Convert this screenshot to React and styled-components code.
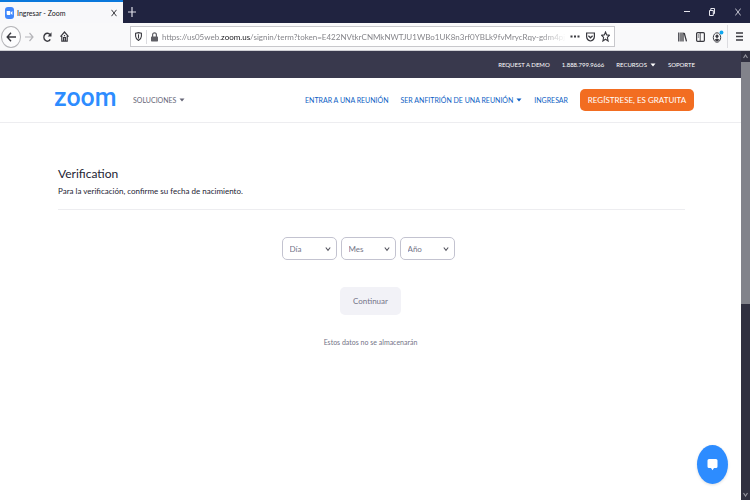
import React from "react";
import styled, { createGlobalStyle, css } from "styled-components";

const Global = createGlobalStyle`
  *, *::before, *::after { box-sizing: border-box; }
  body { margin: 0; background: #fff; color: #232333; font-family: Lato, sans-serif; }
  button, select { font-family: inherit; margin: 0; }
  a { text-decoration: none; }
`;

const Window = styled.div`
  display: flex;
  flex-direction: column;
  min-height: 100vh;
`;

const TabBar = styled.div`
  display: flex;
  align-items: stretch;
  height: 23px;
  background: #202340;
`;

const Tab = styled.div`
  display: flex;
  align-items: center;
  gap: 3px;
  width: 123px;
  padding: 0 4px 0 5px;
  border-top: 2px solid #0a78dc;
  background: #f8f8fa;
  color: #15151a;
  font: 7px Lato, sans-serif;
`;

const TabTitle = styled.span`
  flex: 1;
  white-space: nowrap;
`;

const IconButton = styled.button`
  display: flex;
  align-items: center;
  justify-content: center;
  flex: none;
  width: ${(p) => p.$w || 18}px;
  padding: 0;
  border: 0;
  background: none;
  color: ${(p) => p.$color || "#3a3a40"};
`;

const WindowControls = styled.div`
  display: flex;
  margin-left: auto;
`;

const Toolbar = styled.div`
  display: flex;
  align-items: center;
  height: 28px;
  background: #f9f9fa;
  border-bottom: 1px solid #d0d0d5;
`;

const BackButton = styled(IconButton)`
  height: 22px;
  margin-left: 1px;
  border: 1px solid #b4b4b8;
  border-radius: 50%;
  background: #fcfcfd;
`;

const AddressBar = styled.div`
  display: flex;
  align-items: center;
  flex: 1;
  min-width: 0;
  height: 21px;
  margin: 0 58px 0 57px;
  padding-right: 1px;
  border: 1px solid #c8c8cc;
  background: #fff;
`;

const Separator = styled.span`
  width: 1px;
  height: ${(p) => p.$h}px;
  background: #dcdce0;
`;

const Address = styled.div`
  flex: 1;
  min-width: 0;
  overflow: hidden;
  white-space: nowrap;
  color: #85858a;
  font: 8px/16px Lato, sans-serif;
  mask-image: linear-gradient(to right, #000 calc(100% - 26px), transparent);
  b { color: #15151a; font-weight: 400; }
`;

const Viewport = styled.div`
  display: flex;
  flex: 1;
`;

const Page = styled.div`
  flex: 1;
  min-width: 0;
`;

const Scrollbar = styled.div`
  display: flex;
  flex-direction: column;
  width: 9px;
  background: #303040;
  color: #92929c;
`;

const Thumb = styled.div`
  height: 54%;
  background: #82838b;
`;

const ScrollButton = styled(IconButton)`
  height: 11px;
  ${(p) => p.$end && css`margin-top: auto;`}
`;

const TopBar = styled.nav`
  display: flex;
  align-items: center;
  justify-content: flex-end;
  gap: 12px;
  height: 27px;
  padding: 0 46px;
  background: #39394d;
`;

const NavLink = styled.a`
  display: flex;
  align-items: center;
  gap: 3px;
  color: ${(p) => (p.$muted ? "#666677" : "#0e5fc4")};
  font-size: 7px;
  white-space: nowrap;
`;

const TopLink = styled(NavLink)`
  color: #fff;
  font-size: 6px;
`;

const Header = styled.header`
  display: flex;
  align-items: center;
  height: 45px;
  padding: 0 47px 0 54px;
  border-bottom: 1px solid #ededf0;
`;

const Logo = styled.a`
  width: 79px;
  padding-bottom: 4px;
  color: #2d8cff;
  font: 500 25px/32px Roboto, sans-serif;
`;

const MainNav = styled.nav`
  display: flex;
  align-items: center;
  gap: 12px;
  margin-left: auto;
`;

const SignUp = styled.button`
  height: 22px;
  width: 114px;
  padding: 0;
  border: 0;
  border-radius: 5px;
  background: #f26d21;
  color: #fff;
  font-size: 8px;
  white-space: nowrap;
`;

const Main = styled.main`
  padding: 43px 56px 0 58px;
`;

const Intro = styled.section`
  padding-bottom: 12px;
  border-bottom: 1px solid #ededf0;
`;

const Title = styled.h1`
  margin: 0;
  font-size: 12px;
  font-weight: 400;
  line-height: 16px;
`;

const Lead = styled.p`
  margin: 3px 0 0;
  font-size: 8px;
  line-height: 12px;
`;

const Form = styled.form`
  display: flex;
  flex-direction: column;
  align-items: center;
  padding: 27px 2px 0 0;
`;

const Fields = styled.div`
  display: flex;
  gap: 4px;
  margin-right: 5px;
`;

const Field = styled.label`
  display: grid;
  align-items: center;
  width: 55px;
  height: 23px;
  color: #55555f;
  > * { grid-area: 1 / 1; }
  svg { justify-self: end; margin-right: 6px; pointer-events: none; }
`;

const Select = styled.select`
  appearance: none;
  width: 100%;
  height: 100%;
  padding: 0 7px;
  border: 1px solid #c3c3d0;
  border-radius: 5px;
  background: #fff;
  color: #747487;
  font-size: 8px;
`;

const Continue = styled.button`
  width: 61px;
  height: 28px;
  margin: 27px 0 21px;
  border: 0;
  border-radius: 5px;
  background: #f2f2f7;
  color: #747487;
  font-size: 8px;
`;

const Note = styled.p`
  margin: 0;
  color: #747487;
  font-size: 7px;
  line-height: 12px;
`;

const ChatButton = styled.button`
  position: fixed;
  right: 22px;
  bottom: 16px;
  display: flex;
  align-items: center;
  justify-content: center;
  width: 31px;
  height: 39px;
  padding: 0;
  border: 0;
  border-radius: 50%;
  background: #2d8cff;
  box-shadow: 0 1px 3px #00000022;
`;

const Svg = ({ w = 12, h = 12, sw = 1.2, children }) => (
  <svg width={w} height={h} viewBox={`0 0 ${w} ${h}`} fill="none" stroke="currentColor" strokeWidth={sw} aria-hidden="true">
    {children}
  </svg>
);

const Caret = () => (
  <Svg w={6} h={4}><path d="M.5 .5h5L3 3.5z" fill="currentColor" stroke="none" /></Svg>
);

const Chevron = () => (
  <Svg w={6} h={6} sw={1.1}><path d="M.8 1.5 3 4.3 5.2 1.5" /></Svg>
);

const fields = ["Día", "Mes", "Año"];

export default function App() {
  return (
    <Window>
      <Global />
      <TabBar>
        <Tab>
          <Svg w={9} h={12}>
            <rect width="9" height="12" rx="3" fill="#4087fc" stroke="none" />
            <path d="M1.7 4h3.5v4H2.7q-1 0-1-1zM5.7 5.5 7.4 4v4L5.7 6.6z" fill="#fff" stroke="none" />
          </Svg>
          <TabTitle>Ingresar - Zoom</TabTitle>
          <IconButton $w={10} aria-label="Cerrar pestaña"><Svg w={6} h={8} sw={1}><path d="m.5.8 5 6.4m0-6.4-5 6.4" /></Svg></IconButton>
        </Tab>
        <IconButton $color="#dddde6" aria-label="Nueva pestaña"><Svg w={8} h={10}><path d="M4 0v10M0 5h8" /></Svg></IconButton>
        <WindowControls>
          <IconButton $w={25} $color="#e6e6ee" aria-label="Minimizar"><Svg w={6} h={8} sw={1}><path d="M0 3.5h6" /></Svg></IconButton>
          <IconButton $w={26} $color="#e6e6ee" aria-label="Restaurar"><Svg w={6} h={8} sw={1}><path d="M.5 2.5h3.8v5H.5zM1.8 2.5v-2h3.7v5H4.3" /></Svg></IconButton>
          <IconButton $w={25} $color="#d4d4de" aria-label="Cerrar"><Svg w={6} h={8} sw={0.9}><path d="m.3.5 5.4 7m0-7-5.4 7" /></Svg></IconButton>
        </WindowControls>
      </TabBar>

      <Toolbar>
        <BackButton $w={20} aria-label="Atrás"><Svg w={10} h={10} sw={1.4}><path d="M10 5H1.2M5 .8 1.2 5 5 9.2" /></Svg></BackButton>
        <IconButton $w={17} $color="#b5b5b9" aria-label="Adelante"><Svg w={9} h={10}><path d="M0 5h8M4.5 1 8 5 4.5 9" /></Svg></IconButton>
        <IconButton $w={18} aria-label="Recargar"><Svg w={9} h={10} sw={1.5}><path d="M7.2 7.4A3.4 4 0 1 1 7 2.6" /><path d="M8.5.2v4.3H4.7z" fill="currentColor" stroke="none" /></Svg></IconButton>
        <IconButton $w={17} aria-label="Inicio"><Svg w={9} h={11}><path d="M.5 5.7 4.5 1l4 4.7M1.8 5v5.2h5.4V5" /><path d="M3.6 10V6.5h1.8V10M4.5 4v1.2" /></Svg></IconButton>
        <AddressBar>
          <IconButton $w={15} aria-label="Protección"><Svg w={7} h={9} sw={1.1}><path d="M.6 1.2 3.5.6l2.9.6v3Q6.2 7 3.5 8.4.8 7 .6 4.2z" /><path d="M3.5 2.3v4.2" /></Svg></IconButton>
          <Separator $h={14} />
          <IconButton $w={15} $color="#606066" aria-label="Conexión segura"><Svg w={7} h={10}><rect y="4.5" width="7" height="5" rx=".7" fill="currentColor" stroke="none" /><path d="M1.6 5V2.8a1.9 2 0 0 1 3.8 0V5" /></Svg></IconButton>
          <Address role="textbox" aria-label="Dirección" contentEditable suppressContentEditableWarning spellCheck={false}>
            https://us05web.<b>zoom.us</b>/signin/term?token=E422NVtkrCNMkNWTJU1WBo1UK8n3rf0YBLk9fvMrycRqy-gdm4pjSEU3p7
          </Address>
          <IconButton $w={17} aria-label="Acciones"><Svg w={10} h={3}><path d="M.5 1.5h2M4 1.5h2M7.5 1.5h2" strokeWidth="2" /></Svg></IconButton>
          <IconButton $w={15} aria-label="Pocket"><Svg w={9} h={10}><path d="M.6 1h7.8v3.6Q8.2 8 4.5 9 .8 8 .6 4.6z" /><path d="m2.4 3.8 2.1 2 2.1-2" /></Svg></IconButton>
          <IconButton $w={15} aria-label="Marcador"><Svg w={9} h={11} sw={1.1}><path d="m4.5 1 1.2 2.9 2.8.3-2.1 2.3.7 3.5-2.6-1.8L1.9 10l.7-3.5L.5 4.2l2.8-.3z" /></Svg></IconButton>
        </AddressBar>
        <IconButton $w={18} aria-label="Biblioteca"><Svg w={9} h={10} sw={1.3}><path d="M.8.5v9M3 .5v9M5 .5v9M6.2 1l2.3 8.3" /></Svg></IconButton>
        <IconButton $w={18} aria-label="Barra lateral"><Svg w={9} h={10}><rect x=".6" y=".7" width="7.8" height="8.6" rx="1" /><path d="M4.2 1v8M1.8 3h1.3M1.8 5h1.3" strokeWidth=".9" /></Svg></IconButton>
        <IconButton $w={18} aria-label="Cuenta">
          <Svg w={12} h={14} sw={1}><ellipse cx="5" cy="7.5" rx="3.7" ry="4.7" /><ellipse cx="5" cy="6.2" rx="1.5" ry="1.8" fill="currentColor" stroke="none" /><path d="M2.4 10q2.6-3.2 5.2 0L5 11.5z" fill="currentColor" stroke="none" /><circle cx="9.5" cy="2.5" r="1.9" fill="#10a8f0" stroke="none" /></Svg>
        </IconButton>
        <Separator $h={23} />
        <IconButton $w={22} aria-label="Menú"><Svg w={7} h={9} sw={1.3}><path d="M0 1h7M0 4.5h7M0 8h7" /></Svg></IconButton>
      </Toolbar>

      <Viewport>
        <Page>
          <TopBar>
            <TopLink href="#">REQUEST A DEMO</TopLink>
            <TopLink href="#">1.888.799.9666</TopLink>
            <TopLink href="#">RECURSOS <Caret /></TopLink>
            <TopLink href="#">SOPORTE</TopLink>
          </TopBar>
          <Header>
            <Logo href="#">zoom</Logo>
            <NavLink href="#" $muted>SOLUCIONES <Caret /></NavLink>
            <MainNav>
              <NavLink href="#">ENTRAR A UNA REUNIÓN</NavLink>
              <NavLink href="#">SER ANFITRIÓN DE UNA REUNIÓN <Caret /></NavLink>
              <NavLink href="#">INGRESAR</NavLink>
              <SignUp>REGÍSTRESE, ES GRATUITA</SignUp>
            </MainNav>
          </Header>
          <Main>
            <Intro>
              <Title>Verification</Title>
              <Lead>Para la verificación, confirme su fecha de nacimiento.</Lead>
            </Intro>
            <Form onSubmit={(e) => e.preventDefault()}>
              <Fields>
                {fields.map((name) => (
                  <Field key={name}>
                    <Select aria-label={name}><option>{name}</option></Select>
                    <Chevron />
                  </Field>
                ))}
              </Fields>
              <Continue type="submit">Continuar</Continue>
              <Note>Estos datos no se almacenarán</Note>
            </Form>
          </Main>
        </Page>
        <Scrollbar>
          <ScrollButton $w={9} $color="inherit" aria-label="Subir"><Svg w={5} h={5}><path d="M.5 4 2.5 1l2 3" /></Svg></ScrollButton>
          <Thumb />
          <ScrollButton $w={9} $color="inherit" $end aria-label="Bajar"><Svg w={5} h={5}><path d="m.5 1 2 3 2-3" /></Svg></ScrollButton>
        </Scrollbar>
      </Viewport>
      <ChatButton aria-label="Chat">
        <Svg w={11} h={13}><path d="M2 1h7q1.5 0 1.5 1.5v6q0 1.5-1.5 1.5H7l-1.5 2.2L4 10H2Q.5 10 .5 8.500v-6Q.5 1 2 1z" fill="#fff" stroke="none" /></Svg>
      </ChatButton>
    </Window>
  );
}
